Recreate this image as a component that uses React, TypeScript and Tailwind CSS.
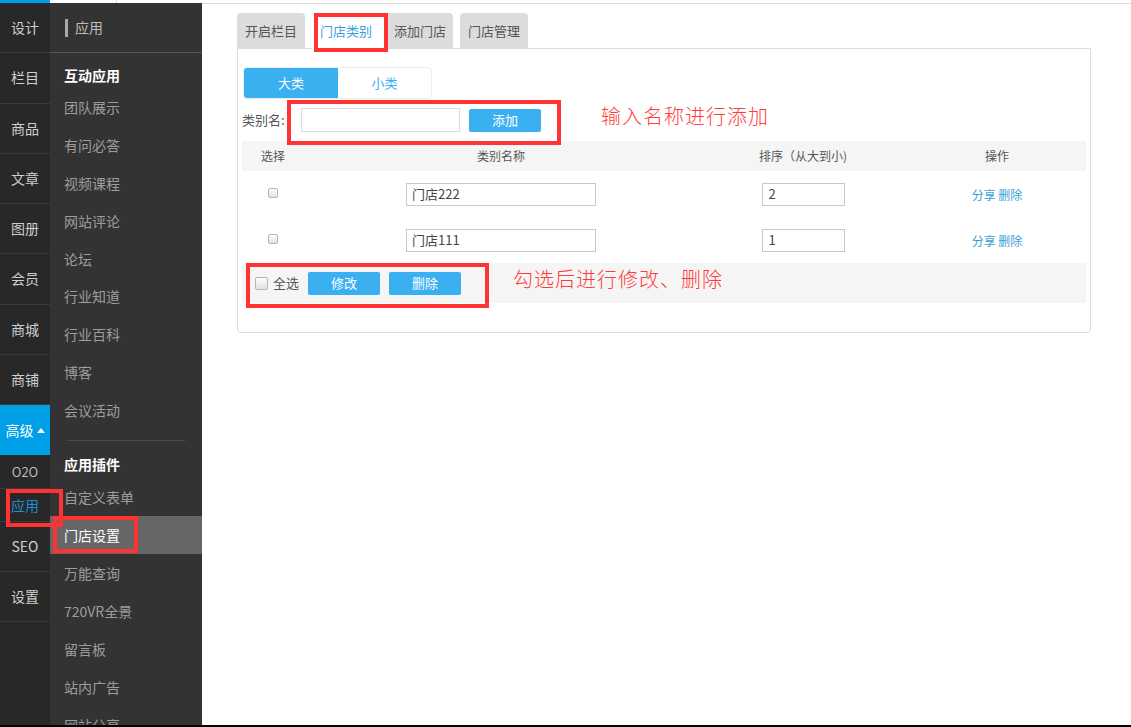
import React from 'react';

const font = { fontFamily: '"Noto Sans CJK SC", "Noto Sans", sans-serif' };

const leftNav = ['设计', '栏目', '商品', '文章', '图册', '会员', '商城', '商铺'];

const appItems = ['团队展示', '有问必答', '视频课程', '网站评论', '论坛', '行业知道', '行业百科', '博客', '会议活动'];
const pluginItems = ['自定义表单', '门店设置', '万能查询', '720VR全景', '留言板', '站内广告', '网站分享'];

const rows = [
  { name: '门店222', order: '2' },
  { name: '门店111', order: '1' },
];

function Check({ big }: { big?: boolean }) {
  return (
    <span
      className={`inline-block rounded-[2px] border border-[#b5b5b5] bg-gradient-to-b from-[#fdfdfd] to-[#e2e2e2] ${
        big ? 'h-[13px] w-[13px]' : 'h-[10px] w-[10px]'
      }`}
    />
  );
}

export default function App() {
  return (
    <div className="relative flex h-[727px] w-[1131px] flex-col overflow-hidden bg-white" style={font}>
      {/* top strip */}
      <div className="flex h-[3px] shrink-0">
        <div className="w-[50px] bg-[#00a0e9]" />
        <div className="w-[66px] bg-white" />
        <div className="w-px bg-[#ddd]" />
        <div className="flex-1 bg-white" />
      </div>

      <div className="flex min-h-0 flex-1">
        {/* first sidebar */}
        <aside className="flex w-[50px] shrink-0 flex-col bg-[#282828] text-[14px] text-[#cfcfcf]">
          {leftNav.map((t) => (
            <div key={t} className="flex h-[50.25px] shrink-0 items-center justify-center border-b border-[#3a3a3a]">
              {t}
            </div>
          ))}
          <div className="flex h-[50px] shrink-0 items-center justify-center gap-[3px] bg-[#00a0e9] text-white">
            高级
            <svg width="8" height="5" viewBox="0 0 8 5">
              <path d="M0 5 L4 0 L8 5 Z" fill="#fff" />
            </svg>
          </div>
          <div className="flex h-[34px] shrink-0 items-center justify-center border-b border-[#3a3a3a] text-[13px] text-[#bbb]">
            O2O
          </div>
          <div className="flex h-[33px] shrink-0 items-center justify-center border-b border-[#3a3a3a] text-[#1c8fd0]">
            应用
          </div>
          <div className="flex h-[50px] shrink-0 items-center justify-center border-b border-[#3a3a3a]">SEO</div>
          <div className="flex h-[50px] shrink-0 items-center justify-center border-b border-[#3a3a3a]">设置</div>
        </aside>

        {/* second sidebar */}
        <aside className="flex w-[152px] shrink-0 flex-col bg-[#333333] text-[14px]">
          <div className="flex h-[50px] shrink-0 items-center gap-[7px] border-b border-[#555] pl-[15px] text-[#bdbdbd]">
            <span className="h-[18px] w-[3px] bg-[#aaa]" />
            应用
          </div>
          <div className="mt-[10px] mb-[1.5px] h-[24px] pl-[14px] font-bold leading-[24px] text-white">互动应用</div>
          {appItems.map((t) => (
            <div key={t} className="flex h-[37.9px] shrink-0 items-center pl-[14px] text-[#9d9d9d]">
              {t}
            </div>
          ))}
          <div className="mx-[17px] mt-[10px] border-t border-[#4c4c4c]" />
          <div className="mt-[11px] mb-[2.5px] h-[24px] pl-[14px] font-bold leading-[24px] text-white">应用插件</div>
          {pluginItems.map((t) => (
            <div
              key={t}
              className={`flex h-[38px] shrink-0 items-center pl-[14px] ${
                t === '门店设置' ? 'bg-[#666666] text-white' : 'text-[#9d9d9d]'
              }`}
            >
              {t}
            </div>
          ))}
        </aside>

        {/* main */}
        <main className="flex-1 border-t border-[#dcdcdc] pl-[35px] pr-[40px] pt-[9px]">
          <div className="flex h-[35px] items-end gap-[7px] text-[13px]">
            <div className="flex h-[35px] w-[68px] items-center justify-center rounded-t-[4px] bg-[#dcdcdc] text-[#555]">开启栏目</div>
            <div className="relative z-10 -mb-px flex h-[36px] w-[68px] items-center justify-center rounded-t-[4px] bg-white text-[#3aa0e0]">门店类别</div>
            <div className="flex h-[35px] w-[66px] items-center justify-center rounded-t-[4px] bg-[#dcdcdc] text-[#555]">添加门店</div>
            <div className="flex h-[35px] w-[68px] items-center justify-center rounded-t-[4px] bg-[#dcdcdc] text-[#555]">门店管理</div>
          </div>

          <div className="h-[285px] w-[854px] rounded-b-[4px] border border-[#dcdcdc] px-[4px] pt-[18px]">
            {/* segmented */}
            <div className="ml-[1px] flex h-[32px] w-[189px] overflow-hidden rounded-[4px] border border-[#ececec] text-[13px]">
              <div className="flex w-[94px] items-center justify-center bg-[#3bb0f0] text-white">大类</div>
              <div className="flex flex-1 items-center justify-center text-[#3bb0f0]">小类</div>
            </div>

            {/* add row */}
            <div className="mt-[9px] flex h-[24px] items-center text-[13px] text-[#555]">
              <span className="w-[59px]">类别名:</span>
              <div className="h-[24px] w-[159px] border border-[#dcdcdc]" />
              <div className="ml-[9px] flex h-[23px] w-[72px] items-center justify-center rounded-[2px] bg-[#3bb0f0] text-white">添加</div>
            </div>

            {/* table */}
            <div className="mt-[9px] w-[844px] text-[12px]">
              <div className="grid h-[30px] grid-cols-[62px_394px_210px_1fr] items-center bg-[#f5f5f5] text-[#555]">
                <div className="text-center">选择</div>
                <div className="text-center">类别名称</div>
                <div className="text-center">排序（从大到小)</div>
                <div className="text-center">操作</div>
              </div>
              {rows.map((r) => (
                <div key={r.name} className="grid h-[46px] grid-cols-[62px_394px_210px_1fr] items-center">
                  <div className="flex justify-center pb-[3px]"><Check /></div>
                  <div className="flex justify-center">
                    <div className="flex h-[23px] w-[190px] items-center border border-[#c8c8c8] pl-[5px] text-[13px] text-[#444]">{r.name}</div>
                  </div>
                  <div className="flex justify-center">
                    <div className="flex h-[23px] w-[83px] items-center border border-[#c8c8c8] pl-[6px] text-[13px] text-[#444]">{r.order}</div>
                  </div>
                  <div className="pt-[2px] text-center text-[#3a9fd8]">分享 删除</div>
                </div>
              ))}
              <div className="flex h-[40px] items-center bg-[#f5f5f5] pl-[13px] text-[13px] text-[#555]">
                <Check big />
                <span className="ml-[5px]">全选</span>
                <div className="ml-[9px] flex h-[23px] w-[72px] items-center justify-center rounded-[2px] bg-[#3bb0f0] text-white">修改</div>
                <div className="ml-[9px] flex h-[23px] w-[72px] items-center justify-center rounded-[2px] bg-[#3bb0f0] text-white">删除</div>
              </div>
            </div>
          </div>
        </main>
      </div>

      <div className="h-[2px] shrink-0 bg-black" />

      {/* annotations */}
      <div className="absolute left-[314px] top-[13px] z-20 h-[39px] w-[74px] border-4 border-[#ff3333]" />
      <div className="absolute left-[287px] top-[100px] z-20 h-[45px] w-[274px] border-4 border-[#ff3333]" />
      <div className="absolute left-[246px] top-[263px] z-20 h-[45px] w-[243px] border-4 border-[#ff3333]" />
      <div className="absolute left-[6px] top-[489px] z-20 h-[38px] w-[57px] border-4 border-[#ff3333]" />
      <div className="absolute left-[53px] top-[516px] z-20 h-[37px] w-[85px] border-4 border-[#ff3333]" />
      <div className="absolute left-[601px] top-[102px] z-20 text-[20px] font-light leading-[28px] tracking-[1px] text-[#ff3b3b]">输入名称进行添加</div>
      <div className="absolute left-[513px] top-[265px] z-20 text-[20px] font-light leading-[28px] tracking-[1px] text-[#ff3b3b]">勾选后进行修改、删除</div>
    </div>
  );
}
